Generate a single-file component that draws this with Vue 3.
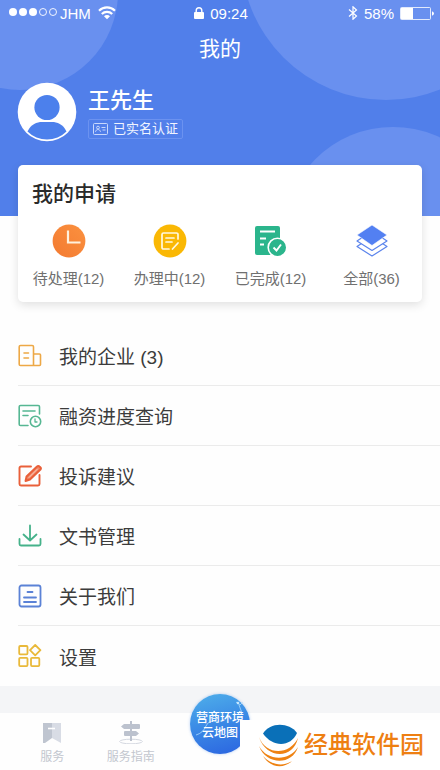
<script setup>
const applications = [
  { icon: 'clock', label: '待处理(12)' },
  { icon: 'note', label: '办理中(12)' },
  { icon: 'done', label: '已完成(12)' },
  { icon: 'layers', label: '全部(36)' },
]

const menu = [
  { icon: 'company', label: '我的企业 (3)' },
  { icon: 'finance', label: '融资进度查询' },
  { icon: 'edit', label: '投诉建议' },
  { icon: 'download', label: '文书管理' },
  { icon: 'about', label: '关于我们' },
  { icon: 'grid', label: '设置' },
]
</script>

<template>
  <div class="page">
    <header class="hero">
      <svg class="bubbles" width="440" height="216" viewBox="0 0 440 216" aria-hidden="true">
        <circle cx="20" cy="-8" r="98" />
        <circle cx="386" cy="-45" r="145" />
        <circle cx="393" cy="237" r="110" />
      </svg>

      <div class="status">
        <div class="status-left">
          <svg width="49" height="10" viewBox="0 0 49 10" aria-hidden="true">
            <g fill="#fff">
              <circle cx="5" cy="4" r="4" />
              <circle cx="15" cy="4" r="4" />
              <circle cx="25" cy="4" r="4" />
            </g>
            <g fill="none" stroke="#fff" stroke-width=".9">
              <circle cx="35" cy="4" r="3.500" />
              <circle cx="45" cy="4" r="3.500" />
            </g>
          </svg>
          <span class="carrier">JHM</span>
          <svg class="wifi" width="18" height="14" viewBox="0 0 18 14" aria-hidden="true">
            <g fill="none" stroke="#fff" stroke-width="2.200">
              <path d="M1 4.700a11.500 11.500 0 0 1 16 0" />
              <path d="M3.800 8a7.400 7.400 0 0 1 10.400 0" />
            </g>
            <path d="M9 13.200 6 10.200a4.200 4.200 0 0 1 6 0z" fill="#fff" />
          </svg>
        </div>
        <div class="status-mid">
          <svg width="10" height="12" viewBox="0 0 10 12" aria-hidden="true">
            <rect y="5" width="10" height="7" rx="1" fill="#fff" />
            <path d="M2.200 6V3.600a2.800 2.800 0 0 1 5.600 0V6" fill="none" stroke="#fff" stroke-width="1.400" />
          </svg>
          <span>09:24</span>
        </div>
        <div class="status-right">
          <svg width="10" height="14" viewBox="0 0 10 14" aria-hidden="true">
            <path d="M1 3.500l7.500 6.500L5 13.200V.8l3.500 3.200L1 10.500" fill="none" stroke="#fff" stroke-width="1.200" />
          </svg>
          <span class="percent">58%</span>
          <svg width="34" height="13" viewBox="0 0 34 13" aria-hidden="true">
            <rect x=".5" y=".5" width="30" height="12" rx="1" fill="none" stroke="#fff" stroke-opacity=".8" />
            <rect x="1" y="1" width="12" height="11" fill="#fff" />
            <path d="M32 4.200q2 .8 2 2.300t-2 2.300z" fill="#fff" />
          </svg>
        </div>
      </div>

      <h1 class="title">我的</h1>

      <div class="profile">
        <svg width="60" height="60" viewBox="0 0 60 60" role="img" aria-label="头像">
          <circle cx="30" cy="30" r="29.300" fill="#fff" />
          <circle cx="30" cy="25.500" r="12.600" fill="#4c80ec" />
          <path d="M10.500 49.500C14 42 20 40 25 40h10c5 0 11 2 14.500 9.500a27.600 27.600 0 0 1-39 0z" fill="#4c80ec" />
        </svg>
        <div class="who">
          <strong class="name">王先生</strong>
          <span class="verified">
            <svg width="15" height="12" viewBox="0 0 15 12" fill="none" stroke="#c9d8fc" aria-hidden="true">
              <rect x=".5" y=".5" width="14" height="11" rx="1" />
              <circle cx="5" cy="4.600" r="1.400" />
              <path d="M2.500 8.800c.5-3 4.500-3 5 0M8.500 4.500h4M9.500 7h3" />
            </svg>
            已实名认证
          </span>
        </div>
      </div>
    </header>

    <section class="card">
      <h2>我的申请</h2>
      <div class="apps">
        <button v-for="a in applications" :key="a.icon" type="button" class="app">
          <svg width="34" height="34" viewBox="0 0 34 34" aria-hidden="true">
            <template v-if="a.icon === 'clock'">
              <defs>
                <linearGradient id="orange" x1="0" y1="1" x2="1" y2="0">
                  <stop offset="0" stop-color="#f37a31" />
                  <stop offset="1" stop-color="#fb913f" />
                </linearGradient>
              </defs>
              <circle cx="17" cy="17" r="16.400" fill="url(#orange)" />
              <path d="M16 6.500v12h12.500" fill="none" stroke="#fff1dd" stroke-width="2.200" />
            </template>
            <template v-else-if="a.icon === 'note'">
              <circle cx="17" cy="17" r="16.400" fill="#fab804" />
              <g fill="none" stroke="#fff8df" stroke-width="1.700" stroke-linecap="round" stroke-linejoin="round">
                <path d="M16 25h-5.500a1.500 1.500 0 0 1-1.500-1.500v-13A1.500 1.500 0 0 1 10.500 9h13a1.500 1.500 0 0 1 1.500 1.500V15M13 14h8M13 18h6M19.500 25l5.500-6" />
              </g>
            </template>
            <template v-else-if="a.icon === 'done'">
              <path d="M3 2h21a2 2 0 0 1 2 2v27H3a2 2 0 0 1-2-2V4a2 2 0 0 1 2-2z" fill="#2bb58c" />
              <path d="M6 7.500h15M6 14.500h6M6 20.500h4" fill="none" stroke="#fff" stroke-width="1.900" />
              <circle cx="23.500" cy="23.500" r="9.300" fill="#2bb58c" stroke="#fff" stroke-width="1.600" />
              <path d="M19.500 23.500l3 3 4.500-6" fill="none" stroke="#fff" stroke-width="1.900" />
            </template>
            <template v-else>
              <g fill="#fff" stroke="#5b84ec" stroke-width="1.200" stroke-linejoin="round">
                <path d="M17 12.500 32 22.500 17 32 2 22.500z" />
                <path d="M17 7 32 17 17 26.500 2 17z" />
              </g>
              <path d="M17 1 32 11 17 21.500 2 11z" fill="#5380f2" stroke="#fff" stroke-width=".6" />
            </template>
          </svg>
          <span>{{ a.label }}</span>
        </button>
      </div>
    </section>

    <nav class="menu" aria-label="我的">
      <a v-for="m in menu" :key="m.icon" href="#" class="row">
        <svg width="24" height="24" viewBox="0 0 24 24" fill="none" stroke-width="1.600" stroke-linecap="round" stroke-linejoin="round" aria-hidden="true">
          <g v-if="m.icon === 'company'" stroke="#eda846">
            <path d="M15.500 21.500H2.500a1.300 1.300 0 0 1-1.300-1.300V2.800A1.300 1.300 0 0 1 2.500 1.500h11.700a1.300 1.300 0 0 1 1.300 1.300zM15.500 10h6a1 1 0 0 1 1 1V20.500a1 1 0 0 1-1 1h-6M6 9h4.500M6 14h4.500" />
          </g>
          <g v-else-if="m.icon === 'finance'" stroke="#56b793">
            <path d="M10 21.500H2.500a1.300 1.300 0 0 1-1.300-1.300V2.800A1.300 1.300 0 0 1 2.500 1.500h17.700a1.300 1.300 0 0 1 1.300 1.300V10M5 7h12M5 11.500h5" />
            <circle cx="17.500" cy="17.500" r="5.200" />
            <path d="M17 15v3h2" stroke-width="1.300" />
          </g>
          <g v-else-if="m.icon === 'edit'" stroke="#e9603a" stroke-width="1.900">
            <path d="M13 2.500H3A1.500 1.500 0 0 0 1.500 4v16A1.500 1.500 0 0 0 3 21.500h17a1.500 1.500 0 0 0 1.500-1.500v-9" />
            <path d="M19 2.500 8.500 12.500l-1 4.500 4.500-1.500L22.500 5.500a1.500 1.500 0 0 0 0-2l-1-1a1.700 1.700 0 0 0-2.500 0z" fill="#f18463" />
            <path d="M19.500 5 11 13.500" stroke="#fbd3c5" stroke-width="1" />
          </g>
          <g v-else-if="m.icon === 'download'" stroke="#45b28a" stroke-width="1.800">
            <path d="M12 1.500V16M5.500 10.500 12 16.500l6.500-6M1.500 15v5a1.500 1.500 0 0 0 1.500 1.500h18a1.500 1.500 0 0 0 1.500-1.500v-5" />
          </g>
          <g v-else-if="m.icon === 'about'" stroke="#5b82d6">
            <rect x="1.500" y="1.500" width="21" height="21" rx="2" stroke-width="1.800" />
            <path d="M9.500 8h5M6 13.500h12M6 18h12" stroke-width="1.800" />
          </g>
          <g v-else stroke="#e9b93a" stroke-width="1.800">
            <rect x="1.200" y="2" width="8.300" height="8.300" rx="1" />
            <rect x="1.200" y="13.800" width="8.300" height="8.300" rx="1" />
            <rect x="13" y="13.800" width="8.300" height="8.300" rx="1" />
            <path d="M17.200 1 22.400 6.200 17.200 11.400 12 6.200z" />
          </g>
        </svg>
        <span>{{ m.label }}</span>
      </a>
    </nav>

    <div class="band"></div>

    <nav class="tabs" aria-label="底部导航">
      <a href="#" class="tab">
        <svg width="24" height="24" viewBox="0 0 24 24" aria-hidden="true">
          <path d="M3 3h9v15l-7 5H3z" fill="#bfc5d0" />
          <path d="M12 3h9v20l-9-5z" fill="#d8dce5" />
          <path d="M8 8.500h7" stroke="#fff" stroke-width="1.600" />
        </svg>
        <span>服务</span>
      </a>
      <a href="#" class="tab">
        <svg width="24" height="24" viewBox="0 0 24 24" aria-hidden="true">
          <ellipse cx="12" cy="21.500" rx="11.400" ry="2.300" fill="none" stroke="#d4d8e0" />
          <path d="M12 1v20" stroke="#bcc2ce" stroke-width="2" />
          <path d="M5 4h15a1 1 0 0 1 1 1v3a1 1 0 0 1-1 1H5L2 6.500zM6 11h11l3 2.500L17 16H6a1 1 0 0 1-1-1v-3a1 1 0 0 1 1-1z" fill="#bcc2ce" />
        </svg>
        <span>服务指南</span>
      </a>
      <button type="button" class="map">
        <svg class="map-art" width="60" height="60" viewBox="0 0 60 60" fill="none" stroke="#b9e4ff" stroke-opacity=".7" aria-hidden="true">
          <path d="M6 41q7-2 10-9t12-4M46 8l4 3 3-3M49 11l3 8" />
          <circle cx="48" cy="9" r="1" fill="#fff" />
        </svg>
        <span>营商环境<br />云地图</span>
      </button>
    </nav>

    <div class="brand">
      <svg width="42" height="44" viewBox="0 0 42 44" aria-hidden="true">
        <path d="M5 10.500C12-1 31-1 39 10 33 24 15 25 5 10.500z" fill="#0a70b8" />
        <g fill="#ee8212">
          <path d="M1 14C8 33 32 32 40 15 35 37 8 36 1 14z" />
          <path d="M1 23C9 38 31 39 40 24 34 43 8 42 1 23z" />
          <path d="M5 33C13 42 25 44 34 38 26 46 12 45 5 33z" />
        </g>
      </svg>
      <span>经典软件园</span>
    </div>
  </div>
</template>

<style>
body {
  margin: 0;
  background: #fff;
}
</style>

<style scoped>
.page {
  position: relative;
  overflow: hidden;
  background: #fefefe;
  color: #3c3c3c;
  font-family: "Liberation Sans", "Noto Sans CJK SC", sans-serif;
}

.page * {
  box-sizing: border-box;
}

svg {
  display: block;
  flex: none;
}

a {
  color: inherit;
  text-decoration: none;
}

button {
  padding: 0;
  border: 0;
  background: none;
  color: inherit;
  font: inherit;
  cursor: pointer;
}

.hero {
  position: relative;
  height: 216px;
  background: #517fea;
  color: #fff;
}

.bubbles {
  position: absolute;
  top: 0;
  right: 0;
  width: 100%;
  fill: #6990ef;
}

.status {
  position: relative;
  display: grid;
  grid-template-columns: 1fr auto 1fr;
  align-items: center;
  height: 26px;
  padding: 0 6px 0 8px;
  font-size: 15px;
}

.status-left,
.status-mid,
.status-right {
  display: flex;
  align-items: center;
}

.status-left {
  gap: 3px;
}

.wifi {
  margin-left: 4px;
}

.status-mid {
  gap: 6px;
}

.status-right {
  justify-content: flex-end;
  gap: 6px;
}

.title {
  position: relative;
  margin: 8px 0 0;
  font-size: 21px;
  font-weight: 400;
  line-height: 30px;
  text-align: center;
}

.profile {
  position: relative;
  display: flex;
  gap: 11px;
  padding: 18px 17px 0;
}

.who {
  display: flex;
  flex-direction: column;
  align-items: flex-start;
}

.name {
  padding: 2px 0 1px;
  font-size: 22px;
  font-weight: 500;
  line-height: 34px;
}

.verified {
  display: flex;
  align-items: center;
  gap: 5px;
  height: 20px;
  padding: 0 4px;
  border: 1px solid #6b92f0;
  border-radius: 2px;
  color: #f0f4ff;
  font-size: 13px;
  line-height: 18px;
}

.card {
  position: relative;
  margin: -51px 18px 0;
  padding: 14px 0 12px;
  border-radius: 5px;
  background: #fff;
  box-shadow: 0 3px 10px rgba(0, 0, 0, 0.12);
}

.card h2 {
  margin: 0;
  padding-left: 14px;
  color: #2a2a2a;
  font-size: 21px;
  font-weight: 500;
  line-height: 30px;
}

.apps {
  display: grid;
  grid-template-columns: repeat(4, 1fr);
  padding-top: 15px;
}

.app {
  display: flex;
  flex-direction: column;
  align-items: center;
  gap: 10px;
  color: #707070;
  font-size: 15px;
  line-height: 22px;
}

.menu {
  padding: 24px 0 0 18px;
}

.row {
  display: flex;
  align-items: center;
  gap: 17px;
  height: 60px;
  border-bottom: 1px solid #ebebeb;
  font-size: 19px;
}

.row:last-child {
  border-bottom: 0;
}

.band {
  height: 27px;
  background: #f4f5f7;
}

.tabs {
  position: relative;
  display: grid;
  grid-template-columns: 1fr 1fr 100px 1fr 1fr;
  height: 57px;
  padding: 7px 13px 0;
  background: #fefefe;
}

.tab {
  display: flex;
  flex-direction: column;
  align-items: center;
  gap: 5px;
  color: #c3c7cf;
  font-size: 12px;
  line-height: 16px;
}

.map {
  position: relative;
  justify-self: center;
  width: 60px;
  height: 60px;
  margin-top: -26px;
  padding-top: 3px;
  border-radius: 50%;
  background: linear-gradient(165deg, #4fb0ea, #3c8ce6 45%, #2a63e0);
  color: #fff;
  box-shadow: 0 0 3px rgba(60, 130, 230, 0.4);
  font-size: 12px;
  font-weight: 500;
  line-height: 15px;
  white-space: nowrap;
}

.map-art {
  position: absolute;
  inset: 0;
}

.map span {
  position: relative;
}

.brand {
  position: absolute;
  right: 0;
  bottom: 0;
  display: flex;
  align-items: center;
  gap: 4px;
  width: 200px;
  height: 50px;
  padding-left: 18px;
  background: #fff;
  color: #ee7f12;
  font-size: 24px;
  font-weight: 500;
  line-height: 44px;
  white-space: nowrap;
}
</style>
